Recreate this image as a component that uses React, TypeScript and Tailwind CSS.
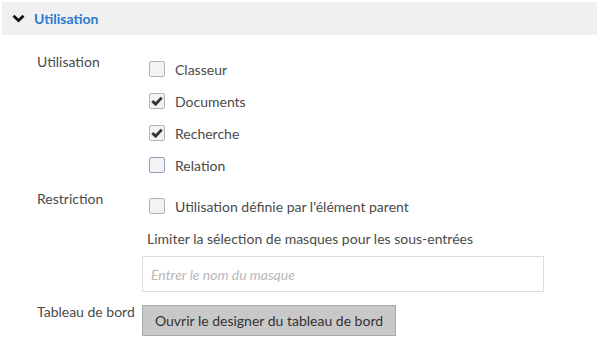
import { ReactNode } from "react";

const Check = ({ checked, focus }: { checked?: boolean; focus?: boolean }) => (
    <span
        className={`ml-[7px] flex h-[16px] w-[16px] items-center justify-center rounded-[2px] border bg-[#f3f3f3] ${
            focus ? "border-[#8ea3bb]" : "border-[#b4b4b4]"
        }`}
    >
        {checked && (
            <svg width="12" height="10" viewBox="0 0 12 10">
                <path d="M1.3 5 L4.6 8.2 L10.7 1.6" fill="none" stroke="#333" strokeWidth="2.8" />
            </svg>
        )}
    </span>
);

const CheckRow = ({ label, checked, focus }: { label: string; checked?: boolean; focus?: boolean }) => (
    <label className="flex h-8 items-center gap-[10px]">
        <Check checked={checked} focus={focus} />
        <span className="text-[14px] text-[#4a4a4a]">{label}</span>
    </label>
);

const Row = ({ label, children, className = "" }: { label: string; children: ReactNode; className?: string }) => (
    <div className={`grid grid-cols-[105px_1fr] ${className}`}>
        <div className="text-[14px] leading-5 text-[#4a4a4a]">{label}</div>
        <div>{children}</div>
    </div>
);

export default function App() {
    return (
        <div className="h-[349px] w-[599px] bg-white" style={{ fontFamily: "Lato, 'Liberation Sans', sans-serif" }}>
            <div className="mx-[2px] mt-[2px] flex h-[33px] items-center bg-[#f0f0f0] pl-[10px]">
                <svg width="13" height="9" viewBox="0 0 13 9">
                    <path d="M1.5 1.8 L6.5 6.5 L11.5 1.8" fill="none" stroke="#111" strokeWidth="2.8" />
                </svg>
                <span className="ml-[9px] text-[14px] font-bold text-[#2b7bd0]">Utilisation</span>
            </div>

            <div className="pl-[37px]">
                <Row label="Utilisation" className="mt-[17px]">
                    <div className="pt-[1px]">
                        <CheckRow label="Classeur" />
                        <CheckRow label="Documents" checked />
                        <CheckRow label="Recherche" checked />
                        <CheckRow label="Relation" focus />
                    </div>
                </Row>

                <Row label="Restriction" className="mt-[8px]">
                    <div className="pt-[1px]">
                        <CheckRow label="Utilisation définie par l'élément parent" />
                        <div className="mt-[7px] pl-[5px] text-[14px] leading-5 text-[#4a4a4a]">
                            Limiter la sélection de masques pour les sous-entrées
                        </div>
                        <input
                            className="mt-[7px] h-[36px] w-[402px] border border-[#dcdcdc] px-[8px] text-[14px] italic outline-none placeholder:text-[#b8b8b8]"
                            placeholder="Entrer le nom du masque"
                        />
                    </div>
                </Row>

                <Row label="Tableau de bord" className="mt-[10px]">
                    <button className="mt-[3px] h-[31px] w-[254px] border border-[#a8a8a8] bg-[#c8c8c8] text-[14px] text-[#333]">
                        Ouvrir le designer du tableau de bord
                    </button>
                </Row>
            </div>
        </div>
    );
}
